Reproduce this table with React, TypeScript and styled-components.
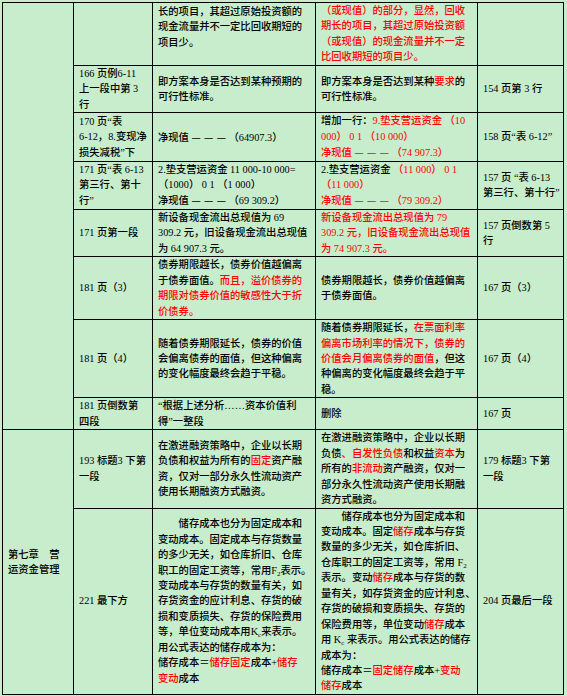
import React from 'react';
import styled, { createGlobalStyle } from 'styled-components';

const GlobalStyle = createGlobalStyle`
	html, body {
		margin: 0;
		padding: 0;
		background: #c7edcc;
	}
	body {
		font-family: "Liberation Serif", "Noto Sans CJK SC", serif;
	}
`;

const Sheet = styled.table`
	margin: 2px 0 0 2px;
	width: 561px;
	border-collapse: collapse;
	table-layout: fixed;
	font-size: 10.3px;
	line-height: 15.45px;
	font-weight: 500;
	color: #000;
`;

const Col = styled.col<{ $w: number }>`
	width: ${(p) => p.$w}px;
`;

const Cell = styled.td<{ $top?: boolean }>`
	border: 1px solid #000;
	padding: ${(p) => (p.$top ? '1px' : '0')} 2px 0 5px;
	vertical-align: ${(p) => (p.$top ? 'top' : 'middle')};
	white-space: nowrap;
	overflow: hidden;
`;

const Red = styled.span`
	color: #ff0000;
`;

const Indent = styled.span`
	display: inline-block;
	width: 2em;
`;

const Sub = styled.span`
	font-size: 7px;
	line-height: 0;
	vertical-align: -2px;
`;

const Dashes = styled.span`
	font-family: "Noto Sans CJK SC", sans-serif;
	word-spacing: 1px;
`;

const Dash = () => <Dashes>— — —</Dashes>;

function App() {
	return (
		<>
			<GlobalStyle />
			<Sheet>
				<colgroup>
					<Col $w={71} />
					<Col $w={79} />
					<Col $w={163} />
					<Col $w={162} />
					<Col $w={86} />
				</colgroup>
				<tbody>
					<tr>
						<Cell rowSpan={8} />
						<Cell />
						<Cell $top>
							长的项目，其超过原始投资额的<br />
							现金流量并不一定比回收期短的<br />
							项目少。
						</Cell>
						<Cell>
							<Red>
								（或现值）的部分，显然，回收<br />
								期长的项目，其超过原始投资额<br />
								（或现值）的现金流量并不一定<br />
								比回收期短的项目少。
							</Red>
						</Cell>
						<Cell />
					</tr>
					<tr>
						<Cell>
							166 页例6-11<br />
							上一段中第 3<br />行
						</Cell>
						<Cell>
							即方案本身是否达到某种预期的<br />
							可行性标准。
						</Cell>
						<Cell>
							即方案本身是否达到某种<Red>要求</Red>的<br />
							可行性标准。
						</Cell>
						<Cell>154 页第 3 行</Cell>
					</tr>
					<tr>
						<Cell>
							170 页“表<br />
							6-12，8.变现净<br />
							损失减税”下
						</Cell>
						<Cell>净现值 <Dash /> （64907.3）</Cell>
						<Cell>
							增加一行：<Red>9.垫支营运资金 （10<br />
							000） 0 1 （10 000）<br />
							净现值 <Dash /> （74 907.3）</Red>
						</Cell>
						<Cell>158 页“表 6-12”</Cell>
					</tr>
					<tr>
						<Cell>
							171 页“表 6-13<br />
							第三行、第十<br />
							行”
						</Cell>
						<Cell>
							2.垫支营运资金 11 000-10 000=<br />
							（1000） 0 1 （1 000）<br />
							净现值 <Dash /> （69 309.2）
						</Cell>
						<Cell>
							2.垫支营运资金 <Red>（11 000） 0 1<br />
							（11 000）<br />
							净现值 <Dash /> （79 309.2）</Red>
						</Cell>
						<Cell>
							157 页 “表 6-13<br />
							第三行、第十行”
						</Cell>
					</tr>
					<tr>
						<Cell>171 页第一段</Cell>
						<Cell>
							新设备现金流出总现值为 69<br />
							309.2 元，旧设备现金流出总现值<br />
							为 64 907.3 元。
						</Cell>
						<Cell>
							<Red>
								新设备现金流出总现值为 79<br />
								309.2 元，旧设备现金流出总现值<br />
								为 74 907.3 元。
							</Red>
						</Cell>
						<Cell>
							157 页倒数第 5<br />行
						</Cell>
					</tr>
					<tr>
						<Cell>181 页（3）</Cell>
						<Cell>
							债券期限越长，债券价值越偏离<br />
							于债券面值。<Red>而且，溢价债券的<br />
							期限对债券价值的敏感性大于折<br />
							价债券。</Red>
						</Cell>
						<Cell>
							债券期限越长，债券价值越偏离<br />
							于债券面值。
						</Cell>
						<Cell>167 页（3）</Cell>
					</tr>
					<tr>
						<Cell>181 页（4）</Cell>
						<Cell>
							随着债券期限延长，债券的价值<br />
							会偏离债券的面值，但这种偏离<br />
							的变化幅度最终会趋于平稳。
						</Cell>
						<Cell>
							随着债券期限延长，<Red>在票面利率<br />
							偏离市场利率的情况下，债券的<br />
							价值会月偏离债券的面值</Red>，但这<br />
							种偏离的变化幅度最终会趋于平<br />
							稳。
						</Cell>
						<Cell>167 页（4）</Cell>
					</tr>
					<tr>
						<Cell>
							181 页倒数第<br />
							四段
						</Cell>
						<Cell>
							“根据上述分析……资本价值利<br />
							得”一整段
						</Cell>
						<Cell>删除</Cell>
						<Cell>167 页</Cell>
					</tr>
					<tr>
						<Cell rowSpan={2}>
							第七章　营<br />
							运资金管理
						</Cell>
						<Cell>
							193 标题3 下第<br />
							一段
						</Cell>
						<Cell>
							在激进融资策略中，企业以长期<br />
							负债和权益为所有的<Red>固定</Red>资产融<br />
							资，仅对一部分永久性流动资产<br />
							使用长期融资方式融资。
						</Cell>
						<Cell>
							在激进融资策略中，企业以长期<br />
							负债<Red>、自发性负债</Red>和权益<Red>资本</Red>为<br />
							所有的<Red>非流动</Red>资产融资，仅对一<br />
							部分永久性流动资产使用长期融<br />
							资方式融资。
						</Cell>
						<Cell>
							179 标题3 下第<br />
							一段
						</Cell>
					</tr>
					<tr>
						<Cell>221 最下方</Cell>
						<Cell>
							<Indent />储存成本也分为固定成本和<br />
							变动成本。固定成本与存货数量<br />
							的多少无关，如仓库折旧、仓库<br />
							职工的固定工资等，常用F<Sub>2</Sub>表示。<br />
							变动成本与存货的数量有关，如<br />
							存货资金的应计利息、存货的破<br />
							损和变质损失、存货的保险费用<br />
							等，单位变动成本用K<Sub>c</Sub>来表示。<br />
							用公式表达的储存成本为：<br />
							储存成本＝<Red>储存固定</Red>成本+<Red>储存</Red><br />
							<Red>变动</Red>成本
						</Cell>
						<Cell>
							<Indent />储存成本也分为固定成本和<br />
							变动成本。固定<Red>储存</Red>成本与存货<br />
							数量的多少无关，如仓库折旧、<br />
							仓库职工的固定工资等，常用 F<Sub>2</Sub><br />
							表示。变动<Red>储存</Red>成本与存货的数<br />
							量有关，如存货资金的应计利息、<br />
							存货的破损和变质损失、存货的<br />
							保险费用等，单位变动<Red>储存</Red>成本<br />
							用 K<Sub>c</Sub> 来表示。用公式表达的储存<br />
							成本为：<br />
							储存成本＝<Red>固定储存</Red>成本+<Red>变动</Red><br />
							<Red>储存</Red>成本
						</Cell>
						<Cell>204 页最后一段</Cell>
					</tr>
				</tbody>
			</Sheet>
		</>
	);
}

export default App;
